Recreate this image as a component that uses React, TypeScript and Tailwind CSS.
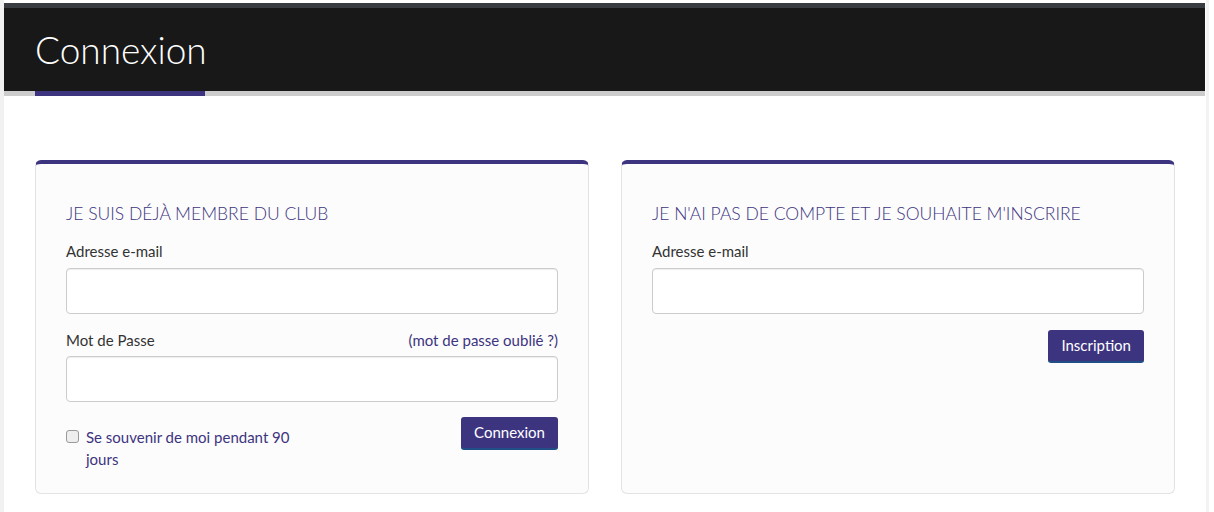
import React from "react";

const font = { fontFamily: "Lato, 'Open Sans', sans-serif" };

function Input() {
  return (
    <div className="h-[46px] w-full rounded-[4px] border border-[#cccccc] bg-white shadow-[inset_0_1px_1px_rgba(0,0,0,0.075)]" />
  );
}

function Button({ children }: { children: React.ReactNode }) {
  return (
    <button className="h-[33px] rounded-[3px] border-b-2 border-[#1f4f86] bg-[#3d3480] px-[13px] text-[15px] leading-none text-white">
      {children}
    </button>
  );
}

export default function App() {
  return (
    <div className="flex min-h-[512px] bg-white" style={font}>
      <div className="w-[4px] shrink-0 bg-[#f1f1f1]" />
      <div className="w-[1201px] shrink-0 pt-[3px]">
        <div className="h-[5px] bg-[#393d41]" />
        <div className="h-[83px] bg-[#181818] px-[31px] pt-[20px]">
          <h1 className="text-[37px] font-light leading-[44px] text-white">Connexion</h1>
        </div>
        <div className="flex h-[5px] bg-[#cccccc] px-[31px]">
          <div className="w-[170px] bg-[#3d3480]" />
        </div>
        <div className="grid grid-cols-2 gap-[32px] pl-[31px] pr-[30px] pt-[64px]">
          <div className="h-[334px] rounded-[6px] border border-t-4 border-[#e3e3e3] border-t-[#3d3480] bg-[#fcfcfc] px-[30px] pt-[39px]">
            <h2 className="text-[17.5px] font-light leading-[22px] text-[#3d3480]">JE SUIS DÉJÀ MEMBRE DU CLUB</h2>
            <div className="mt-[16px] text-[15px] leading-[20px] text-[#333333]">Adresse e-mail</div>
            <div className="mt-[7px]"><Input /></div>
            <div className="mt-[16px] flex justify-between text-[15px] leading-[20px]">
              <span className="text-[#333333]">Mot de Passe</span>
              <span className="text-[#3d3480]">(mot de passe oublié ?)</span>
            </div>
            <div className="mt-[6px]"><Input /></div>
            <div className="mt-[15px] flex items-start justify-between">
              <label className="flex w-[246px] items-start pt-[9px] text-[15px] leading-[22px] text-[#3d3480]">
                <span className="mt-[4px] h-[13px] w-[13px] shrink-0 rounded-[3px] border border-[#9a9a9a] bg-[#eeeeee]" />
                <span className="ml-[7px] w-[212px]">Se souvenir de moi pendant 90 jours</span>
              </label>
              <Button>Connexion</Button>
            </div>
          </div>
          <div className="h-[334px] rounded-[6px] border border-t-4 border-[#e3e3e3] border-t-[#3d3480] bg-[#fcfcfc] px-[30px] pt-[39px]">
            <h2 className="text-[17.5px] font-light leading-[22px] text-[#3d3480]">JE N'AI PAS DE COMPTE ET JE SOUHAITE M'INSCRIRE</h2>
            <div className="mt-[16px] text-[15px] leading-[20px] text-[#333333]">Adresse e-mail</div>
            <div className="mt-[7px]"><Input /></div>
            <div className="mt-[16px] flex justify-end">
              <Button>Inscription</Button>
            </div>
          </div>
        </div>
      </div>
      <div className="w-[1px] shrink-0" />
      <div className="w-[3px] shrink-0 bg-[#f3f3f3]" />
    </div>
  );
}
